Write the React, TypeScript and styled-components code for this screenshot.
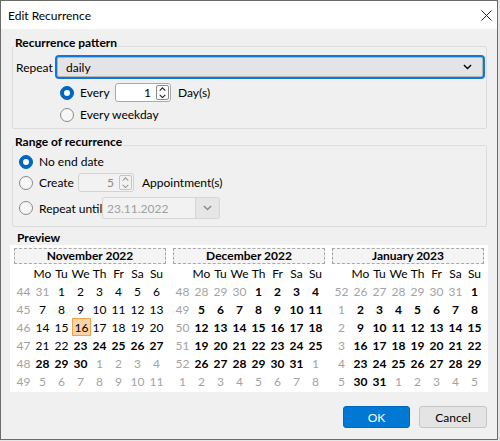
import React from "react";
import styled, { createGlobalStyle } from "styled-components";

const GlobalStyle = createGlobalStyle`
  html, body {
    margin: 0;
    padding: 0;
    background: #e6e6e6;
  }
  body {
    font-family: "Segoe UI", Lato, "Noto Sans", sans-serif;
    font-size: 12px;
    color: #000;
  }
`;

const Window = styled.div`
  width: 498px;
  height: 440px;
  box-sizing: border-box;
  border: 1px solid #6b6b6b;
  background: #f0f0f0;
  display: flex;
  flex-direction: column;
`;

const TitleBar = styled.div`
  height: 28px;
  flex-shrink: 0;
  background: #fff;
  display: flex;
  align-items: center;
  justify-content: space-between;
  padding: 0 5px 0 7px;
`;

const Body = styled.div`
  flex: 1;
  padding: 0 9px;
  display: flex;
  flex-direction: column;
`;

const GroupTitle = styled.div<{ $top: number }>`
  position: relative;
  z-index: 1;
  align-self: flex-start;
  margin: ${(p) => p.$top}px 0 0 4px;
  padding: 0 1px;
  height: 16px;
  line-height: 16px;
  font-weight: bold;
  background: #f0f0f0;
`;

const GroupBox = styled.div<{ $pad: string }>`
  margin: -5px 1px 0 2px;
  border: 1px solid #dcdcdc;
  border-radius: 2px;
  padding: ${(p) => p.$pad};
  display: flex;
  flex-direction: column;
`;

const Row = styled.div<{ $indent: number; $top: number; $h: number }>`
  display: flex;
  align-items: center;
  height: ${(p) => p.$h}px;
  margin-top: ${(p) => p.$top}px;
  padding-left: ${(p) => p.$indent}px;
`;

const Label = styled.span<{ $w?: number; $muted?: boolean }>`
  ${(p) => (p.$w ? `width: ${p.$w}px; flex-shrink: 0;` : "")}
  white-space: nowrap;
  color: ${(p) => (p.$muted ? "#8a8a8a" : "#000")};
`;

const Select = styled.div`
  flex: 1;
  height: 24px;
  box-sizing: border-box;
  margin-right: 1px;
  border: 2px solid #0f78d6;
  border-radius: 4px;
  box-shadow: inset 0 0 0 1px #b4b4b4;
  background: #e4e4e6;
  display: flex;
  align-items: center;
  justify-content: space-between;
  padding: 0 11px 0 9px;
`;

const Radio = styled.span<{ $checked?: boolean }>`
  width: 14px;
  height: 14px;
  box-sizing: border-box;
  border-radius: 50%;
  flex-shrink: 0;
  margin-right: 6px;
  display: flex;
  align-items: center;
  justify-content: center;
  background: ${(p) => (p.$checked ? "#0067c0" : "#f7f7f7")};
  border: 1px solid ${(p) => (p.$checked ? "#0067c0" : "#8a8a8a")};

  &::after {
    content: "";
    display: ${(p) => (p.$checked ? "block" : "none")};
    width: 6px;
    height: 6px;
    border-radius: 50%;
    background: #fff;
  }
`;

const SpinBox = styled.div<{ $disabled?: boolean }>`
  width: 56px;
  height: 19px;
  box-sizing: border-box;
  flex-shrink: 0;
  border: 1px solid ${(p) => (p.$disabled ? "#d2d2d2" : "#a9a9a9")};
  border-radius: 3px;
  background: ${(p) => (p.$disabled ? "#f2f2f2" : "#fff")};
  color: ${(p) => (p.$disabled ? "#8a8a8a" : "#000")};
  display: flex;
  align-items: center;
  justify-content: flex-end;
  padding-right: 1px;
`;

const SpinValue = styled.span`
  margin-right: 5px;
`;

const Spinner = styled.div<{ $disabled?: boolean }>`
  width: 13px;
  height: 15px;
  box-sizing: border-box;
  border: 1px solid ${(p) => (p.$disabled ? "#c4c4c4" : "#8a8a8a")};
  border-radius: 2px;
  display: flex;
  flex-direction: column;
  align-items: center;
  justify-content: space-around;
  color: ${(p) => (p.$disabled ? "#9a9a9a" : "#222")};
`;

const After = styled.span<{ $gap: number }>`
  margin-left: ${(p) => p.$gap}px;
  white-space: nowrap;
`;

const DateBox = styled.div`
  width: 118px;
  height: 22px;
  box-sizing: border-box;
  flex-shrink: 0;
  border: 1px solid #d6d6d6;
  border-radius: 2px;
  background: #f2f2f2;
  display: flex;
  align-items: stretch;
`;

const DateText = styled.span`
  flex: 1;
  color: #a0a0a0;
  padding-left: 4px;
  display: flex;
  align-items: center;
`;

const DateDrop = styled.span`
  width: 23px;
  background: #e6e6e6;
  border-left: 1px solid #d6d6d6;
  display: flex;
  align-items: center;
  justify-content: center;
  color: #8a8a8a;
`;

const PreviewTitle = styled.div`
  margin: 4px 0 0 7px;
  height: 14px;
  line-height: 14px;
  font-weight: bold;
`;

const Preview = styled.div`
  background: #fff;
  height: 147px;
  box-sizing: border-box;
  padding: 3px 0 0 4px;
  display: grid;
  grid-template-columns: repeat(3, 152px);
  column-gap: 7px;
  align-content: start;
`;

const Month = styled.div`
  display: flex;
  flex-direction: column;
`;

const MonthHeader = styled.div`
  height: 16px;
  box-sizing: border-box;
  border: 1px dashed #a8a8a8;
  background: #f4f4f4;
  font-weight: bold;
  line-height: 14px;
  text-align: center;
`;

const DayGrid = styled.div`
  display: grid;
  grid-template-columns: repeat(8, 19px);
  grid-auto-rows: 18px;
`;

const Cell = styled.span<{ $kind: "week" | "head" | "other" | "day"; $bold?: boolean; $today?: boolean }>`
  display: flex;
  align-items: center;
  justify-content: center;
  box-sizing: border-box;
  color: ${(p) => (p.$kind === "week" || p.$kind === "other" ? "#a3a3a3" : "#000")};
  font-weight: ${(p) => (p.$bold ? "bold" : "normal")};
  ${(p) => (p.$today ? "background: #fdd3a8; border: 1px solid #f0a24e; margin: 0 -1px 0 1px;" : "")}
`;

const Footer = styled.div`
  display: flex;
  justify-content: flex-end;
  gap: 9px;
  margin: 14px 1px 0 0;
`;

const Button = styled.button<{ $primary?: boolean; $w: number }>`
  width: ${(p) => p.$w}px;
  height: 22px;
  font: inherit;
  border-radius: 3px;
  padding: 0;
  border: 1px solid ${(p) => (p.$primary ? "#0068c4" : "#c6c6c6")};
  background: ${(p) => (p.$primary ? "#0078d4" : "#e4e4e4")};
  color: ${(p) => (p.$primary ? "#fff" : "#000")};
`;

const Chevron = ({ size = 9, up = false }: { size?: number; up?: boolean }) => (
  <svg width={size} height={size / 2 + 1} viewBox="0 0 10 6" fill="none" stroke="currentColor" strokeWidth="1.5">
    <path d={up ? "M1 5 L5 1 L9 5" : "M1 1 L5 5 L9 1"} />
  </svg>
);

const CloseIcon = () => (
  <svg width="11" height="11" viewBox="0 0 11 11" stroke="#222" strokeWidth="1">
    <path d="M0.5 0.5 L10.5 10.5 M10.5 0.5 L0.5 10.5" />
  </svg>
);

const TODAY = new Date(2022, 10, 16);
const BOLD_FROM = new Date(2022, 10, 23);

function isoWeek(d: Date) {
  const t = new Date(Date.UTC(d.getFullYear(), d.getMonth(), d.getDate()));
  const day = t.getUTCDay() || 7;
  t.setUTCDate(t.getUTCDate() + 4 - day);
  const yearStart = new Date(Date.UTC(t.getUTCFullYear(), 0, 1));
  return Math.ceil(((t.getTime() - yearStart.getTime()) / 86400000 + 1) / 7);
}

const HEADS = ["Mo", "Tu", "We", "Th", "Fr", "Sa", "Su"];
const NAMES = ["January", "February", "March", "April", "May", "June", "July", "August", "September", "October", "November", "December"];

const MonthView = ({ year, month }: { year: number; month: number }) => {
  const first = new Date(year, month, 1);
  const offset = (first.getDay() + 6) % 7;
  const start = new Date(year, month, 1 - offset);
  const cells: React.ReactNode[] = [<Cell key="corner" $kind="head" />];
  HEADS.forEach((h) => cells.push(<Cell key={h} $kind="head">{h}</Cell>));
  for (let w = 0; w < 6; w++) {
    const monday = new Date(start.getFullYear(), start.getMonth(), start.getDate() + w * 7);
    cells.push(<Cell key={`w${w}`} $kind="week">{isoWeek(monday)}</Cell>);
    for (let d = 0; d < 7; d++) {
      const day = new Date(monday.getFullYear(), monday.getMonth(), monday.getDate() + d);
      const inMonth = day.getMonth() === month;
      const isToday = day.getTime() === TODAY.getTime();
      cells.push(
        <Cell
          key={`d${w}-${d}`}
          $kind={inMonth ? "day" : "other"}
          $bold={inMonth && day >= BOLD_FROM}
          $today={isToday}
        >
          {day.getDate()}
        </Cell>
      );
    }
  }
  return (
    <Month>
      <MonthHeader>
        {NAMES[month]} {year}
      </MonthHeader>
      <DayGrid>{cells}</DayGrid>
    </Month>
  );
};

export default function App() {
  return (
    <>
      <GlobalStyle />
      <Window>
        <TitleBar>
          <span>Edit Recurrence</span>
          <CloseIcon />
        </TitleBar>
        <Body>
          <GroupTitle $top={6}>Recurrence pattern</GroupTitle>
          <GroupBox $pad="8px 0 4px 0">
            <Row $indent={3} $top={0} $h={24}>
              <Label $w={39}>Repeat</Label>
              <Select>
                <span>daily</span>
                <Chevron size={9} />
              </Select>
            </Row>
            <Row $indent={47} $top={4} $h={19}>
              <Radio $checked />
              <Label $w={35}>Every</Label>
              <SpinBox>
                <SpinValue>1</SpinValue>
                <Spinner>
                  <Chevron size={7} up />
                  <Chevron size={7} />
                </Spinner>
              </SpinBox>
              <After $gap={7}>Day(s)</After>
            </Row>
            <Row $indent={47} $top={3} $h={19}>
              <Radio />
              <Label>Every weekday</Label>
            </Row>
          </GroupBox>

          <GroupTitle $top={5}>Range of recurrence</GroupTitle>
          <GroupBox $pad="6px 0 7px 0">
            <Row $indent={6} $top={0} $h={19}>
              <Radio $checked />
              <Label>No end date</Label>
            </Row>
            <Row $indent={6} $top={2} $h={19}>
              <Radio />
              <Label $w={39}>Create</Label>
              <SpinBox $disabled>
                <SpinValue>5</SpinValue>
                <Spinner $disabled>
                  <Chevron size={7} up />
                  <Chevron size={7} />
                </Spinner>
              </SpinBox>
              <After $gap={8}>Appointment(s)</After>
            </Row>
            <Row $indent={6} $top={5} $h={22}>
              <Radio />
              <Label $w={63}>Repeat until</Label>
              <DateBox>
                <DateText>23.11.2022</DateText>
                <DateDrop>
                  <Chevron size={9} />
                </DateDrop>
              </DateBox>
            </Row>
          </GroupBox>

          <PreviewTitle>Preview</PreviewTitle>
          <Preview>
            <MonthView year={2022} month={10} />
            <MonthView year={2022} month={11} />
            <MonthView year={2023} month={0} />
          </Preview>

          <Footer>
            <Button $primary $w={67}>OK</Button>
            <Button $w={68}>Cancel</Button>
          </Footer>
        </Body>
      </Window>
    </>
  );
}
